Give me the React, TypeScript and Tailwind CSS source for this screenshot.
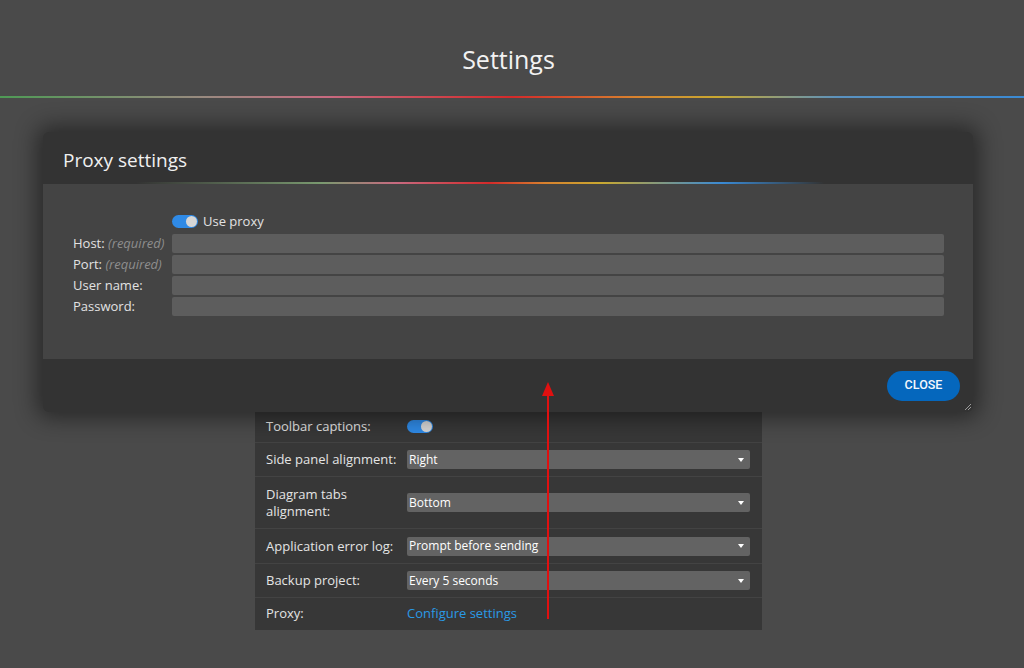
import React from "react";

const font = { fontFamily: '"Open Sans", "Noto Sans", sans-serif' };

function Toggle() {
  return (
    <div className="w-[26px] h-[13px] rounded-full bg-[#2f8ae6] relative shrink-0">
      <div className="absolute right-[1px] top-[1px] w-[11px] h-[11px] rounded-full bg-[#d6d6d6]" />
    </div>
  );
}

function Select({ value }: { value: string }) {
  return (
    <div className="h-[19px] flex-1 rounded-[2px] bg-[#636363] flex items-center justify-between pl-[2px] pr-[6px] text-[12px] text-white">
      <span>{value}</span>
      <span className="w-0 h-0 border-l-[3px] border-r-[3px] border-t-[4px] border-l-transparent border-r-transparent border-t-white" />
    </div>
  );
}

function Row({ label, children, h }: { label: React.ReactNode; children?: React.ReactNode; h: string }) {
  return (
    <div className={`flex items-center border-b border-[#434343] pl-[11px] pr-[12px] ${h}`}>
      <div className="w-[141px] text-[13px] text-[#e4e4e4] leading-[17px]">{label}</div>
      {children}
    </div>
  );
}

function FormRow({ label, hint }: { label: string; hint?: string }) {
  return (
    <div className="flex items-center h-[19px]">
      <div className="w-[99px] text-[13px] text-[#e2e2e2] whitespace-nowrap">
        {label} {hint && <span className="italic text-[#8e8e8e]">{hint}</span>}
      </div>
      <div className="flex-1 h-[19px] rounded-[2px] bg-[#5d5d5d]" />
    </div>
  );
}

type Stop = [string, string, number?];

// rainbow rule, drawn as an svg gradient
function Rule({ id, stops, h = 1 }: { id: string; stops: Stop[]; h?: number }) {
  return (
    <svg className="block w-full" height={h} preserveAspectRatio="none" viewBox="0 0 100 1">
      <defs>
        <linearGradient id={id} x1="0" y1="0" x2="1" y2="0">
          {stops.map(([o, c, a], i) => (
            <stop key={i} offset={o} stopColor={c} stopOpacity={a ?? 1} />
          ))}
        </linearGradient>
      </defs>
      <rect x="0" y="0" width="100" height="1" fill={`url(#${id})`} />
    </svg>
  );
}

export default function App() {
  return (
    <div className="relative w-[1024px] h-[668px] overflow-hidden bg-[#4a4a4a]" style={font}>
      {/* page header */}
      <div className="h-[96px] flex items-center justify-center pt-[24px] pr-[7px] text-[25px] text-[#f2f2f2]">Settings</div>
      <Rule
        id="pageRule"
        h={2}
        stops={[
          ["0", "#4e9a55"],
          ["0.2", "#9a8a80"],
          ["0.32", "#c86a80"],
          ["0.5", "#d42a2a"],
          ["0.62", "#d8822e"],
          ["0.7", "#c9a830"],
          ["0.82", "#5a92c0"],
          ["1", "#3a8ad4"],
        ]}
      />

      {/* settings panel, mostly hidden under the dialog */}
      <div className="ml-[255px] mt-[41px] w-[507px] bg-[#373737]">
        <Row label="Language:" h="h-[34px]"><Select value="English" /></Row>
        <Row label="Theme:" h="h-[34px]"><Select value="Dark" /></Row>
        <Row label="Units:" h="h-[34px]"><Select value="Pixels" /></Row>
        <Row label="Grid:" h="h-[34px]"><Toggle /></Row>
        <Row label="Snap to grid:" h="h-[34px]"><Toggle /></Row>
        <Row label="Rulers:" h="h-[34px]"><Toggle /></Row>
        <Row label="Tooltips:" h="h-[34px]"><Toggle /></Row>
        <Row label="Toolbar size:" h="h-[34px]"><Select value="Medium" /></Row>
        <Row label="Toolbar captions:" h="h-[32px]"><Toggle /></Row>
        <Row label="Side panel alignment:" h="h-[34px]"><Select value="Right" /></Row>
        <Row label={<>Diagram tabs<br />alignment:</>} h="h-[52px]"><Select value="Bottom" /></Row>
        <Row label="Application error log:" h="h-[35px]"><Select value="Prompt before sending" /></Row>
        <Row label="Backup project:" h="h-[34px]"><Select value="Every 5 seconds" /></Row>
        <div className="flex items-center h-[32px] pl-[11px]">
          <div className="w-[141px] text-[13px] text-[#e4e4e4]">Proxy:</div>
          <span className="text-[13px] text-[#2a9ae6]">Configure settings</span>
        </div>
      </div>

      {/* proxy dialog */}
      <div className="absolute left-[43px] top-[132px] w-[930px] h-[280px] rounded-[6px] overflow-hidden bg-[#333333] shadow-[0_0_22px_6px_rgba(0,0,0,0.45)] flex flex-col">
        <div className="h-[50px] flex items-center pl-[20px] pt-[7px] text-[19px] text-[#f0f0f0]">Proxy settings</div>
        <Rule
          id="dialogRule"
          h={2}
          stops={[
            ["0.1", "#7a9a70", 0],
            ["0.3", "#7a9a70"],
            ["0.38", "#c86a80"],
            ["0.48", "#d42a2a"],
            ["0.54", "#d8822e"],
            ["0.6", "#c9a830"],
            ["0.73", "#3a8ad4"],
            ["0.84", "#3a8ad4", 0],
          ]}
        />
        <div className="h-[175px] bg-[#444444] pt-[30px] pl-[30px] pr-[29px] flex flex-col gap-[2px]">
          <div className="flex items-center gap-[5px] pl-[99px] h-[15px] mb-[3px]">
            <Toggle />
            <span className="text-[13px] text-[#e2e2e2]">Use proxy</span>
          </div>
          <FormRow label="Host:" hint="(required)" />
          <FormRow label="Port:" hint="(required)" />
          <FormRow label="User name:" />
          <FormRow label="Password:" />
        </div>
        <div className="relative flex-1 flex items-center justify-end pr-[13px]">
          <button
            className="h-[30px] w-[73px] rounded-full bg-[#0567bd] text-[#f4f8fc] text-[12.5px] font-medium"
            style={{ fontFamily: 'Roboto, "Liberation Sans", sans-serif' }}
          >
            CLOSE
          </button>
          <svg className="absolute right-[1px] bottom-[1px]" width="8" height="8" viewBox="0 0 8 8">
            <path d="M7 1 L1 7 M7 4 L4 7" stroke="#9a9a9a" strokeWidth="1" />
          </svg>
        </div>
      </div>

      {/* annotation arrow */}
      <svg className="absolute left-[538px] top-[378px]" width="20" height="245" viewBox="0 0 20 245">
        <line x1="10" y1="18" x2="10" y2="241" stroke="#e01010" strokeWidth="2" />
        <polygon points="10,4 4,18 16,18" fill="#e01010" />
      </svg>
    </div>
  );
}
